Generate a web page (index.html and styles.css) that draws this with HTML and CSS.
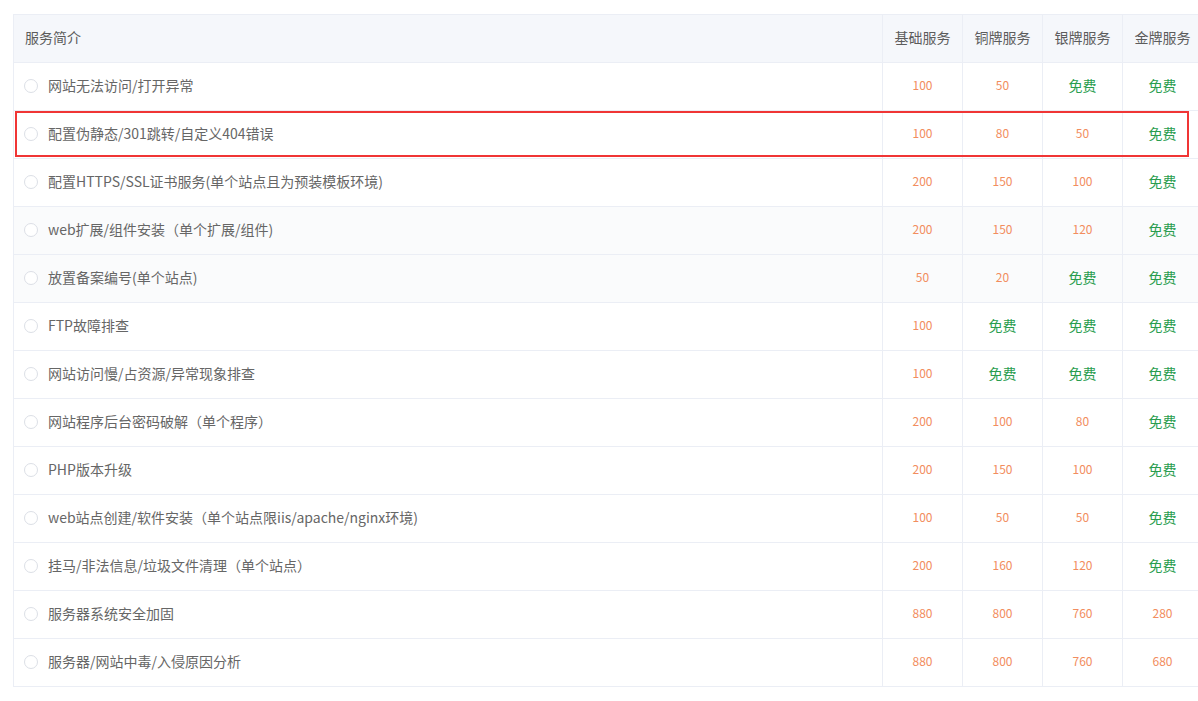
FILE: index.html
```html
<!DOCTYPE html>
<html lang="zh-CN">
<head>
<meta charset="utf-8">
<title>服务列表</title>
<link rel="stylesheet" href="styles.css">
</head>
<body>
<div class="wrap">
  <table class="svc">
    <colgroup>
      <col class="c-name">
      <col class="c-price"><col class="c-price"><col class="c-price"><col class="c-price">
    </colgroup>
    <thead>
      <tr><th class="name">服务简介</th><th>基础服务</th><th>铜牌服务</th><th>银牌服务</th><th>金牌服务</th></tr>
    </thead>
    <tbody>
      <tr><td class="name"><span class="radio"></span>网站无法访问/打开异常</td><td class="p">100</td><td class="p">50</td><td class="f">免费</td><td class="f">免费</td></tr>
      <tr><td class="name"><span class="radio"></span>配置伪静态/301跳转/自定义404错误</td><td class="p">100</td><td class="p">80</td><td class="p">50</td><td class="f">免费</td></tr>
      <tr><td class="name"><span class="radio"></span>配置HTTPS/SSL证书服务(单个站点且为预装模板环境)</td><td class="p">200</td><td class="p">150</td><td class="p">100</td><td class="f">免费</td></tr>
      <tr class="shade"><td class="name"><span class="radio"></span>web扩展/组件安装（单个扩展/组件)</td><td class="p">200</td><td class="p">150</td><td class="p">120</td><td class="f">免费</td></tr>
      <tr class="shade"><td class="name"><span class="radio"></span>放置备案编号(单个站点)</td><td class="p">50</td><td class="p">20</td><td class="f">免费</td><td class="f">免费</td></tr>
      <tr><td class="name"><span class="radio"></span>FTP故障排查</td><td class="p">100</td><td class="f">免费</td><td class="f">免费</td><td class="f">免费</td></tr>
      <tr><td class="name"><span class="radio"></span>网站访问慢/占资源/异常现象排查</td><td class="p">100</td><td class="f">免费</td><td class="f">免费</td><td class="f">免费</td></tr>
      <tr><td class="name"><span class="radio"></span>网站程序后台密码破解（单个程序）</td><td class="p">200</td><td class="p">100</td><td class="p">80</td><td class="f">免费</td></tr>
      <tr><td class="name"><span class="radio"></span>PHP版本升级</td><td class="p">200</td><td class="p">150</td><td class="p">100</td><td class="f">免费</td></tr>
      <tr><td class="name"><span class="radio"></span>web站点创建/软件安装（单个站点限iis/apache/nginx环境)</td><td class="p">100</td><td class="p">50</td><td class="p">50</td><td class="f">免费</td></tr>
      <tr><td class="name"><span class="radio"></span>挂马/非法信息/垃圾文件清理（单个站点）</td><td class="p">200</td><td class="p">160</td><td class="p">120</td><td class="f">免费</td></tr>
      <tr><td class="name"><span class="radio"></span>服务器系统安全加固</td><td class="p">880</td><td class="p">800</td><td class="p">760</td><td class="p">280</td></tr>
      <tr><td class="name"><span class="radio"></span>服务器/网站中毒/入侵原因分析</td><td class="p">880</td><td class="p">800</td><td class="p">760</td><td class="p">680</td></tr>
    </tbody>
  </table>
  <div class="highlight"></div>
</div>
</body>
</html>
```

FILE: styles.css
```css
html, body {
  margin: 0;
  padding: 0;
  background: #ffffff;
  overflow: hidden;
}

body {
  font-family: "Noto Sans CJK SC", "Noto Sans", sans-serif;
  color: #666666;
}

.wrap {
  position: relative;
  padding: 14px 0 0 13px;
}

.svc {
  border-collapse: collapse;
  table-layout: fixed;
  width: 1190px;
}

.c-name { width: 869px; }
.c-price { width: 80px; }

.svc th,
.svc td {
  border: 1px solid #ebeef5;
  height: 43px;
  padding: 0 0 4px 0;
  text-align: center;
  vertical-align: middle;
  font-weight: normal;
  white-space: nowrap;
}

.svc thead th {
  background: #f5f7fb;
  color: #5c5c5c;
  font-size: 14px;
}

.svc .name {
  text-align: left;
  padding-left: 10px;
  font-size: 14px;
  color: #666666;
}

.svc thead th.name {
  padding-left: 11px;
  color: #5c5c5c;
}

.shade td {
  background: #fafbfc;
}

.radio {
  display: inline-block;
  width: 12px;
  height: 12px;
  border: 1px solid #dcdfe6;
  border-radius: 50%;
  background: #ffffff;
  vertical-align: -2px;
  margin-right: 10px;
}

.svc td.p {
  color: #f28d5e;
  font-size: 12px;
}

.svc td.f {
  color: #2a9d4f;
  font-size: 14px;
}

.highlight {
  position: absolute;
  left: 15px;
  top: 111px;
  width: 1174px;
  height: 46px;
  box-sizing: border-box;
  border: 2px solid #f03535;
  pointer-events: none;
}
```
